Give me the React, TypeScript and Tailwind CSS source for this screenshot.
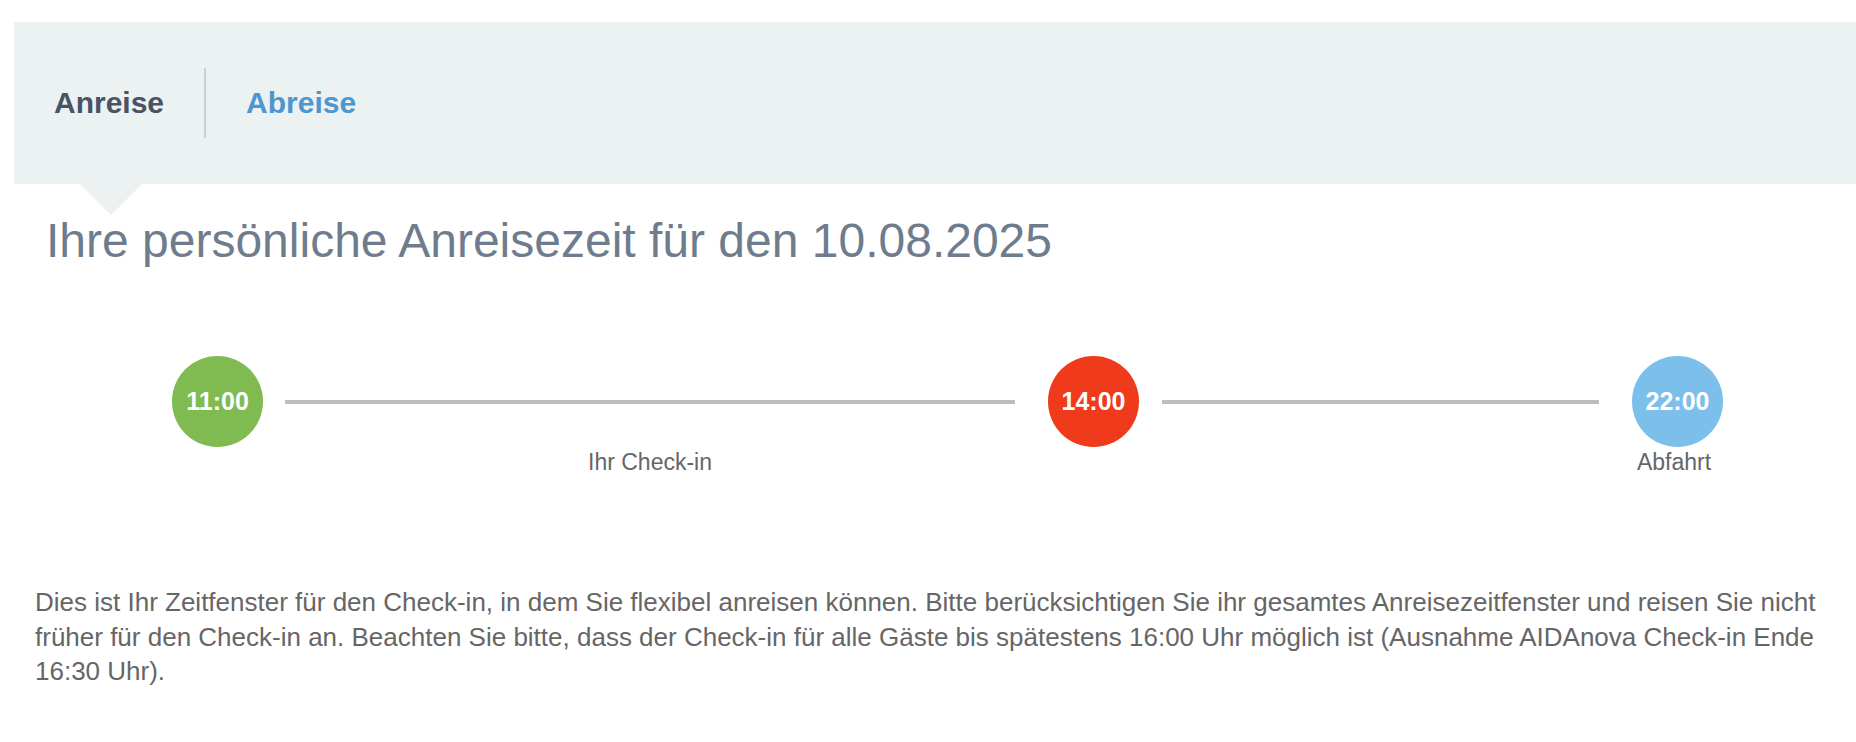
import React from 'react';

interface Stop {
  time: string;
  color: string;
}

function Circle({ stop }: { stop: Stop }) {
  return (
    <div
      className={`flex h-[91px] w-[91px] items-center justify-center rounded-full ${stop.color}`}
    >
      <span className="text-[25px] font-bold leading-none text-white">{stop.time}</span>
    </div>
  );
}

function Segment({ width, label }: { width: string; label?: string }) {
  return (
    <div className={`flex flex-col ${width}`}>
      <div className="flex h-[91px] items-center">
        <div className="h-[4px] w-full bg-[#bdbdbd]" />
      </div>
      {label && (
        <div className="mt-[1px] text-center text-[23px] leading-[28px] text-[#666666]">{label}</div>
      )}
    </div>
  );
}

export default function App() {
  return (
    <div className="min-h-[742px] bg-white pt-[22px] font-['Liberation_Sans',Arial,sans-serif]">
      {/* Tabs */}
      <div className="ml-[14px] flex h-[162px] items-center bg-[#ecf2f2] pl-[40px]">
        <span className="text-[30px] font-bold leading-none text-[#4a5366]">Anreise</span>
        <div className="ml-[40px] h-[70px] w-[2px] bg-[#c9cfd2]" />
        <span className="ml-[40px] text-[30px] font-bold leading-none text-[#4d96cf]">Abreise</span>
      </div>
      <div className="ml-[80px] h-0 w-0 border-l-[31.5px] border-r-[31.5px] border-t-[31px] border-l-transparent border-r-transparent border-t-[#ecf2f2]" />

      <h1 className="pl-[46px] text-[48px] font-normal leading-[52px] text-[#6f7c8e]">
        Ihre persönliche Anreisezeit für den 10.08.2025
      </h1>

      {/* Timeline */}
      <div className="mt-[89px] flex pl-[172px]">
        <div className="flex w-[91px] flex-col">
          <Circle stop={{ time: '11:00', color: 'bg-[#80bb51]' }} />
        </div>
        <div className="w-[22px]" />
        <Segment width="w-[730px]" label="Ihr Check-in" />
        <div className="w-[33px]" />
        <div className="flex w-[91px] flex-col">
          <Circle stop={{ time: '14:00', color: 'bg-[#ef3a1b]' }} />
        </div>
        <div className="w-[23px]" />
        <Segment width="w-[437px]" />
        <div className="w-[33px]" />
        <div className="flex w-[91px] flex-col">
          <Circle stop={{ time: '22:00', color: 'bg-[#7bbfea]' }} />
          <div className="mt-[1px] pr-[7px] text-center text-[23px] leading-[28px] text-[#666666]">
            Abfahrt
          </div>
        </div>
      </div>

      <p className="mt-[109px] pl-[35px] pr-[20px] text-[26px] leading-[34.5px] text-[#666666]">
        Dies ist Ihr Zeitfenster für den Check-in, in dem Sie flexibel anreisen können. Bitte
        berücksichtigen Sie ihr gesamtes Anreisezeitfenster und reisen Sie nicht früher für den
        Check-in an. Beachten Sie bitte, dass der Check-in für alle Gäste bis spätestens 16:00 Uhr
        möglich ist (Ausnahme AIDAnova Check-in Ende 16:30 Uhr).
      </p>
    </div>
  );
}
